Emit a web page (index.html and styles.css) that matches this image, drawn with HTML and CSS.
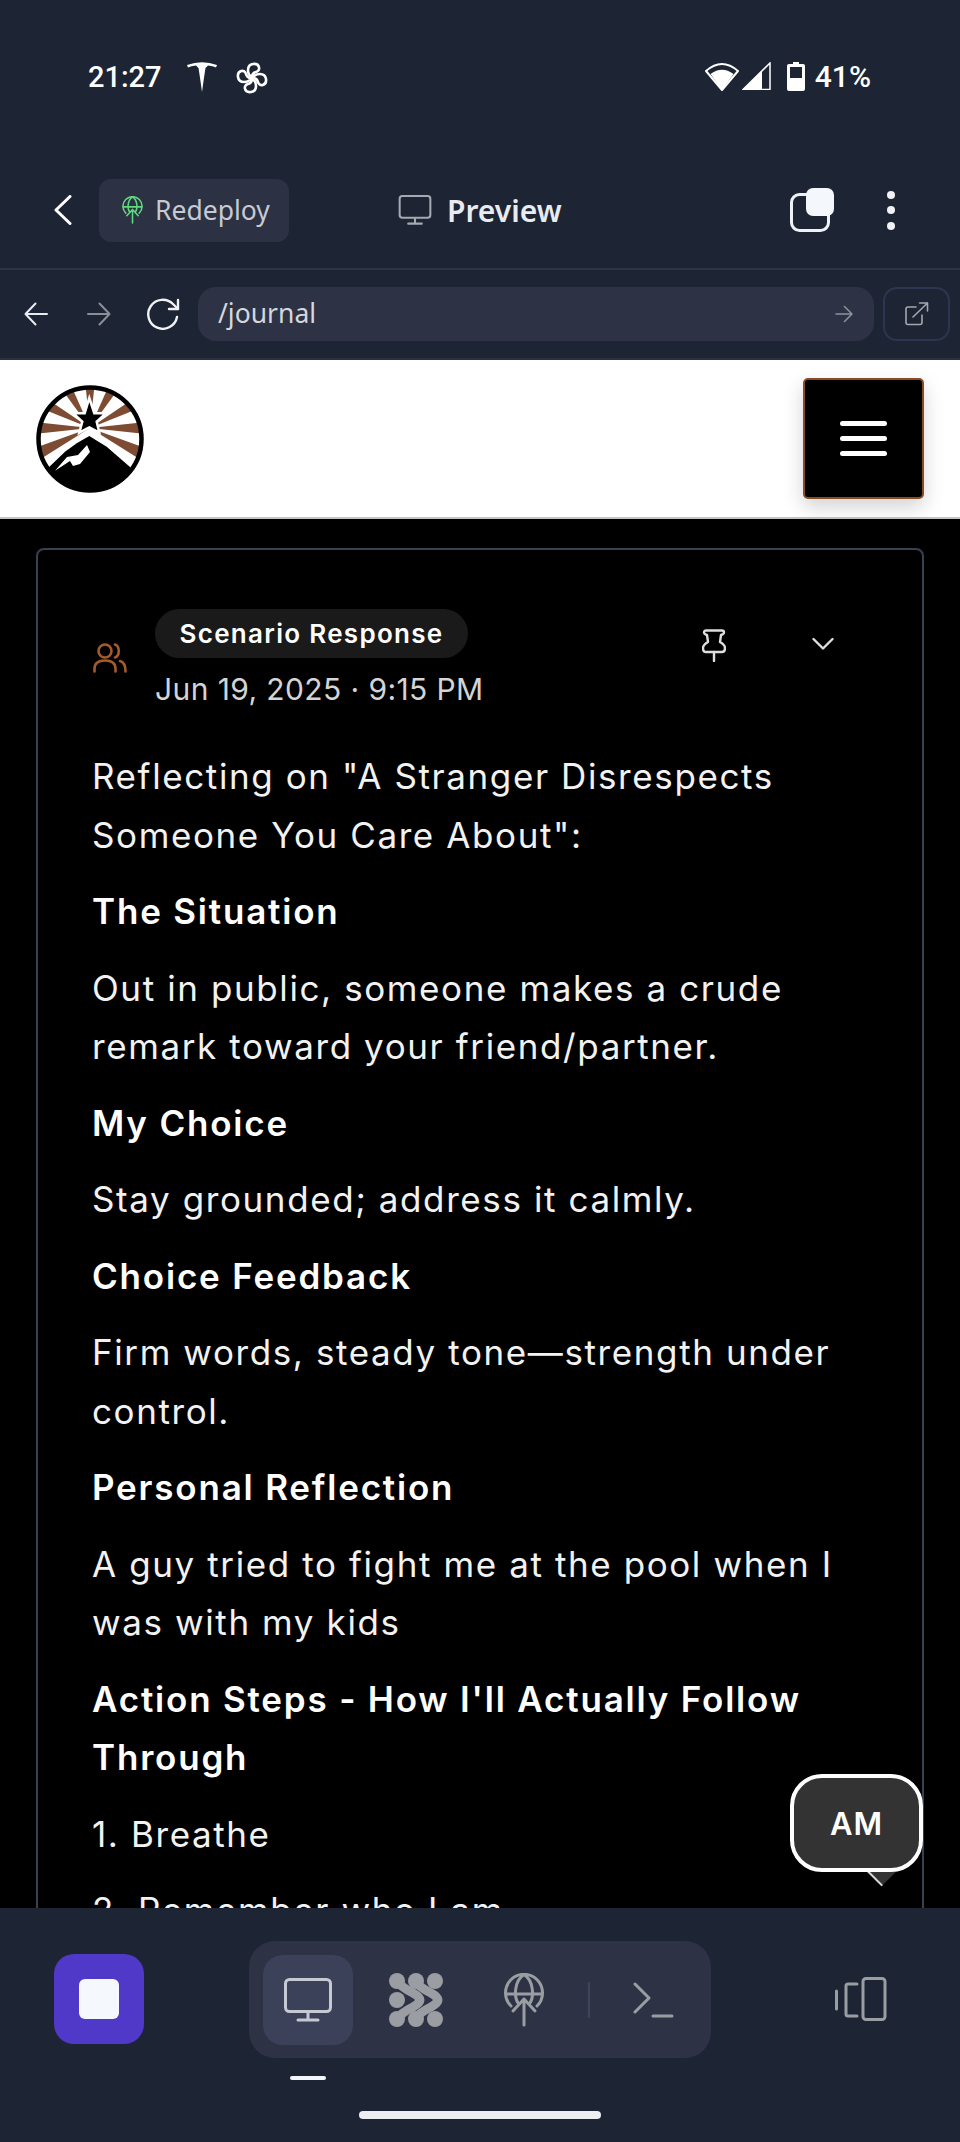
FILE: index.html
```html
<!DOCTYPE html>
<html lang="en">
<head>
  <meta charset="UTF-8" />
  <meta name="viewport" content="width=device-width, initial-scale=1.0"/>
  <title>Journal - Preview</title>
  <link rel="stylesheet" href="styles.css">
</head>
<body>
  <svg class="defs" width="0" height="0">
    <symbol id="globe-up" viewBox="0 0 40 54">
      <g fill="none" stroke="currentColor" stroke-width="3" stroke-linecap="round" stroke-linejoin="round">
        <path d="M7 33 A18.500 18.500 0 1 1 33 33"/>
        <path d="M20 1.500 C10 8 10 24 14 30"/>
        <path d="M20 1.500 C30 8 30 24 26 30"/>
        <path d="M2 21 H38"/>
        <path d="M20 52 V26 M9 38 L20 26 L31 38"/>
      </g>
    </symbol>
    <symbol id="monitor" viewBox="0 0 48 44">
      <g fill="none" stroke="currentColor" stroke-width="3" stroke-linecap="round" stroke-linejoin="round">
        <rect x="1.500" y="1.500" width="45" height="32" rx="4"/>
        <path d="M24 34 V42 M14 42 H34"/>
      </g>
    </symbol>
  </svg>

  <div class="app">
    <header class="topbar">
      <div class="status">
        <div class="status-left">
          <span class="clock">21:27</span>
          <svg class="tesla" viewBox="0 0 30 30" fill="#fff">
            <path d="M0 3 Q15 -2.500 30 3 L29 5.500 Q26 3.600 21 3.400 L18.500 6 Q17.500 12 15 30 Q12.500 12 11.500 6 L9 3.400 Q4 3.600 1 5.500 Z"/>
          </svg>
          <svg class="fan" viewBox="0 0 32 32" fill="none" stroke="#fff" stroke-width="2.600" stroke-linejoin="round">
            <path d="M16 15 C11 13 10 3 17 2 C24 1 25 9 20 10 C18 10.500 16 12 16 15 Z"/>
            <path d="M16 15 C11 13 10 3 17 2 C24 1 25 9 20 10 C18 10.500 16 12 16 15 Z" transform="rotate(90 16 16)"/>
            <path d="M16 15 C11 13 10 3 17 2 C24 1 25 9 20 10 C18 10.500 16 12 16 15 Z" transform="rotate(180 16 16)"/>
            <path d="M16 15 C11 13 10 3 17 2 C24 1 25 9 20 10 C18 10.500 16 12 16 15 Z" transform="rotate(270 16 16)"/>
          </svg>
        </div>
        <div class="status-right">
          <svg class="wifi" viewBox="0 0 34 29">
            <path d="M17 28 L1 9 Q17 -5 33 9 Z" fill="none" stroke="#fff" stroke-width="2" stroke-linejoin="round"/>
            <path d="M17 28 L5.500 12 Q17 3.500 28.500 12 Z" fill="#fff"/>
          </svg>
          <svg class="signal" viewBox="0 0 29 28">
            <path d="M1 27.500 L28 1 V27.500 Z" fill="none" stroke="#fff" stroke-width="1.500"/>
            <path d="M1 27.500 L20 9 V27.500 Z" fill="#fff"/>
          </svg>
          <svg class="battery" viewBox="0 0 18 29">
            <path d="M6 0 H12 V2 H16 Q18 2 18 4 V27 Q18 29 16 29 H2 Q0 29 0 27 V4 Q0 2 2 2 H6 Z M3 5 V16 H15 V5 Z" fill="#fff" fill-rule="evenodd"/>
          </svg>
          <span class="percent">41%</span>
        </div>
      </div>

      <div class="toolbar">
        <svg class="chevron-back" viewBox="0 0 18 30" fill="none" stroke="#fff" stroke-width="3" stroke-linecap="round" stroke-linejoin="round">
          <path d="M16 1.500 L2 15 L16 28.500"/>
        </svg>
        <button class="redeploy">
          <svg class="redeploy-icon"><use href="#globe-up"/></svg>
          Redeploy
        </button>
        <div class="title">
          <svg class="title-icon"><use href="#monitor"/></svg>
          <span>Preview</span>
        </div>
        <svg class="tabs-icon" viewBox="0 0 44 44">
          <rect x="1.500" y="6.500" width="37" height="36" rx="8" fill="none" stroke="#eef2f7" stroke-width="3"/>
          <rect x="16" y="0" width="28" height="28" rx="7" fill="#f4f8fd"/>
        </svg>
        <div class="dots"><i></i><i></i><i></i></div>
      </div>

      <div class="addressbar">
        <svg class="nav-arrow" viewBox="0 0 24 24" fill="none" stroke="#e8ebf0" stroke-width="2" stroke-linecap="round" stroke-linejoin="round">
          <path d="M23 12 H1.500 M11.500 1.500 L1.500 12 L11.500 22.500"/>
        </svg>
        <svg class="nav-arrow nav-arrow-off" viewBox="0 0 24 24" fill="none" stroke="#8a8e96" stroke-width="2" stroke-linecap="round" stroke-linejoin="round">
          <path d="M1 12 H22.500 M12.500 1.500 L22.500 12 L12.500 22.500"/>
        </svg>
        <svg class="reload" viewBox="0 0 34 32" fill="none" stroke="#f0f2f5" stroke-width="2.400" stroke-linecap="round" stroke-linejoin="round">
          <path d="M31 19 A14.500 14.500 0 1 1 27 6 L32 11"/>
          <path d="M32 2 V11 H23"/>
        </svg>
        <div class="url">
          <span>/journal</span>
          <svg class="url-go" viewBox="0 0 18 18" fill="none" stroke="#8f939c" stroke-width="1.500" stroke-linecap="round" stroke-linejoin="round">
            <path d="M1 9 H17 M9.500 1.500 L17 9 L9.500 16.500"/>
          </svg>
        </div>
        <div class="external">
          <svg viewBox="0 0 24 24" fill="none" stroke="#a3a7af" stroke-width="1.600" stroke-linecap="round" stroke-linejoin="round">
            <path d="M11 5 H3 Q1 5 1 7 V20.500 Q1 22.500 3 22.500 H15 Q17 22.500 17 20.500 V13"/>
            <path d="M8 15 L22.500 1 M14.500 1 H22.500 V9"/>
          </svg>
        </div>
      </div>
    </header>

    <main class="preview">
      <nav class="site-nav">
        <svg class="logo" viewBox="0 0 108 108">
          <defs><clipPath id="logo-clip"><circle cx="54" cy="54" r="51"/></clipPath></defs>
          <circle cx="54" cy="54" r="52" fill="#fff"/>
          <g clip-path="url(#logo-clip)">
            <g fill="#7d4c33">
              <path d="M54 43 L120 36 V50 Z"/>
              <path d="M54 43 L120 36 V50 Z" transform="rotate(26 54 43)"/>
              <path d="M54 43 L120 36 V50 Z" transform="rotate(-28 54 43)"/>
              <path d="M54 43 L120 36 V50 Z" transform="rotate(-60 54 43)"/>
              <path d="M54 43 L120 36 V50 Z" transform="rotate(-90 54 43)"/>
              <path d="M54 43 L120 36 V50 Z" transform="rotate(-120 54 43)"/>
              <path d="M54 43 L120 36 V50 Z" transform="rotate(-152 54 43)"/>
              <path d="M54 43 L120 36 V50 Z" transform="rotate(180 54 43)"/>
              <path d="M54 43 L120 36 V50 Z" transform="rotate(154 54 43)"/>
            </g>
            <path d="M53.300 13 L58.300 28.300 H70 L60.700 36.700 L63.300 47.700 L53.300 42.300 L43.300 47.700 L46.300 36.700 L37.300 28.300 H48.700 Z" fill="#000" stroke="#fff" stroke-width="2.500" stroke-linejoin="miter"/>
            <path d="M53.300 48 L72 59 L100 88 V110 H8 V86 L28 63 L40 56 Z" fill="#fff"/>
            <path d="M53.300 51 L70.700 61.700 L94 82 V110 H10 V85 L29 66.700 L40.700 58.300 Z" fill="#000"/>
            <path d="M19 85.700 L31 72 L42 70 L51 60 L54 67 L44 79 L37 81 L34 76 Z" fill="#fff"/>
          </g>
          <circle cx="54" cy="54" r="51.500" fill="none" stroke="#000" stroke-width="4.500"/>
        </svg>
        <button class="menu-btn"><i></i><i></i><i></i></button>
      </nav>

      <div class="page">
        <article class="entry">
          <div class="entry-head">
            <svg class="users-icon" viewBox="0 0 34 30" fill="none" stroke="#a45a2a" stroke-width="2.600" stroke-linecap="round">
              <circle cx="12" cy="8" r="6.500"/>
              <path d="M22 1.500 C27 3 27 13 22 14.500"/>
              <path d="M1.500 28.500 V26 C1.500 20 6 17.500 12 17.500 C18 17.500 22.500 20 22.500 26 V28.500"/>
              <path d="M27 18 C31 19 32.500 22 32.500 28.500"/>
            </svg>
            <div class="entry-meta">
              <span class="chip">Scenario Response</span>
              <time class="entry-date">Jun 19, 2025 · 9:15 PM</time>
            </div>
            <div class="entry-actions">
              <svg class="pin-icon" viewBox="0 0 24 33" fill="none" stroke="#dedede" stroke-width="2.400" stroke-linecap="round" stroke-linejoin="round">
                <path d="M4 1.500 H20 Q22 1.500 22 3.500 Q22 5 19 6 L18 13 Q23 16 23 19 Q23 23 20 23 H4 Q1 23 1 19 Q1 16 6 13 L5 6 Q2 5 2 3.500 Q2 1.500 4 1.500 Z"/>
                <path d="M12 23 V32"/>
              </svg>
              <svg class="chevron-icon" viewBox="0 0 22 13" fill="none" stroke="#dedede" stroke-width="2.400" stroke-linecap="round" stroke-linejoin="round">
                <path d="M1.500 2 L11 11.500 L20.500 2"/>
              </svg>
            </div>
          </div>

          <div class="entry-body">
            <p>Reflecting on "A Stranger Disrespects Someone You Care About":</p>
            <h4>The Situation</h4>
            <p>Out in public, someone makes a crude remark toward your friend/partner.</p>
            <h4>My Choice</h4>
            <p>Stay grounded; address it calmly.</p>
            <h4>Choice Feedback</h4>
            <p>Firm words, steady tone—strength under control.</p>
            <h4>Personal Reflection</h4>
            <p>A guy tried to fight me at the pool when I was with my kids</p>
            <h4>Action Steps - How I'll Actually Follow Through</h4>
            <p>1. Breathe</p>
            <p>2. Remember who I am</p>
          </div>
        </article>
      </div>

      <div class="am-bubble">
        <span class="am-tail"></span>
        <span class="am-face">AM</span>
      </div>
    </main>

    <footer class="dock">
      <button class="stop-btn"><i></i></button>
      <div class="dock-center">
        <div class="dock-tabs">
          <div class="dock-tab dock-tab-active">
            <svg class="dock-monitor"><use href="#monitor"/></svg>
          </div>
          <div class="dock-tab">
            <svg class="nodes-icon" viewBox="0 0 54 54" fill="#9a9ea3">
              <circle cx="46" cy="8" r="8"/>
              <circle cx="8" cy="27" r="8"/>
              <circle cx="46" cy="46" r="8"/>
              <circle cx="8" cy="8" r="8"/>
              <circle cx="27" cy="8" r="8"/>
              <circle cx="8" cy="46" r="8"/>
              <circle cx="27" cy="46" r="8"/>
              <g fill="none" stroke="#9a9ea3" stroke-width="9" stroke-linecap="round" stroke-linejoin="round">
                <path d="M8 8 C12 14 18 17 24 20 Q31 24 31 27 Q31 30 24 34 C18 37 12 40 8 46"/>
                <path d="M26 8 C30 14 36 17 42 20 Q49 24 49 27 Q49 30 42 34 C36 37 30 40 26 46"/>
              </g>
            </svg>
          </div>
          <div class="dock-tab">
            <svg class="globe-icon"><use href="#globe-up"/></svg>
          </div>
          <span class="dock-divider"></span>
          <div class="dock-tab dock-tab-term">
            <svg class="term-icon" viewBox="0 0 41 36" fill="none" stroke="#9a9ea3" stroke-width="3" stroke-linecap="round" stroke-linejoin="round">
              <path d="M2 2 L16 16 L2 30"/>
              <path d="M20 34 H39"/>
            </svg>
          </div>
        </div>
        <span class="dock-underline"></span>
      </div>
      <svg class="device-icon" viewBox="0 0 52 44" fill="none" stroke="#9a9ea3" stroke-width="3" stroke-linecap="round" stroke-linejoin="round">
        <path d="M1.500 14 V32"/>
        <path d="M22 7 H13 Q11 7 11 9 V37 Q11 39 13 39 H22"/>
        <rect x="28" y="1.500" width="22" height="41" rx="3"/>
      </svg>
      <span class="home-bar"></span>
    </footer>
  </div>
</body>
</html>
```
FILE: styles.css
```css
* {
  box-sizing: border-box;
  margin: 0;
  padding: 0;
}

body {
  background: #000;
  font-family: "Inter", "Liberation Sans", sans-serif;
  color: #fff;
}

button {
  border: none;
  font: inherit;
}

.defs {
  display: block;
}

.app {
  display: flex;
  flex-direction: column;
  width: 960px;
  height: 2142px;
  overflow: hidden;
}

/* top app chrome */
.topbar {
  background: #1d2433;
  height: 360px;
  flex-shrink: 0;
}

.status {
  display: flex;
  justify-content: space-between;
  height: 154px;
  padding: 62px 89px 0 88px;
}

.status-left,
.status-right {
  display: flex;
  align-items: flex-start;
  height: 31px;
}

.clock,
.percent {
  font-family: "Roboto", sans-serif;
  font-weight: 500;
  font-size: 29px;
  line-height: 30px;
}

.percent {
  font-size: 30px;
  margin-left: 10px;
}

.tesla {
  width: 30px;
  height: 30px;
  margin-left: 25px;
}

.fan {
  width: 32px;
  height: 32px;
  margin-left: 19px;
}

.wifi {
  width: 34px;
  height: 29px;
}

.signal {
  width: 29px;
  height: 28px;
  margin-left: 3px;
}

.battery {
  width: 18px;
  height: 29px;
  margin-left: 16px;
}

.toolbar {
  display: flex;
  align-items: center;
  height: 116px;
  padding: 0 0 2px 54px;
  border-bottom: 2px solid #2d3246;
}

.chevron-back {
  width: 18px;
  height: 30px;
}

.redeploy {
  display: flex;
  align-items: center;
  width: 190px;
  height: 63px;
  margin-left: 27px;
  padding-left: 23px;
  gap: 12px;
  background: #2c3144;
  border-radius: 12px;
  color: #c5cad3;
  font-family: "Noto Sans", sans-serif;
  font-size: 26.500px;
  line-height: 60px;
}

.redeploy-icon {
  width: 21px;
  height: 28px;
  color: #5fd97e;
}

.title {
  display: flex;
  align-items: center;
  gap: 15px;
  margin-left: 109px;
  font-family: "Noto Sans", sans-serif;
  font-weight: 600;
  font-size: 30px;
  color: #e8ebf0;
}

.title-icon {
  width: 34px;
  height: 30px;
  color: #a5a9b0;
}

.tabs-icon {
  width: 44px;
  height: 44px;
  margin-left: 228px;
}

.dots {
  display: flex;
  flex-direction: column;
  gap: 7.500px;
  margin-left: 53px;
}

.dots i {
  display: block;
  width: 8px;
  height: 8px;
  border-radius: 50%;
  background: #f0f2f5;
}

.addressbar {
  display: flex;
  align-items: flex-start;
  height: 90px;
  padding: 17px 10px 0 24px;
  border-bottom: 2px solid #2a3042;
}

.nav-arrow {
  width: 24px;
  height: 24px;
  margin-top: 15px;
}

.nav-arrow-off {
  margin-left: 39px;
}

.reload {
  width: 34px;
  height: 32px;
  margin: 11px 0 0 35px;
}

.url {
  display: flex;
  align-items: center;
  justify-content: space-between;
  width: 676px;
  height: 54px;
  margin-left: 18px;
  padding: 0 21px 0 20px;
  background: #2d3245;
  border-radius: 18px;
  font-family: "Noto Sans", sans-serif;
  font-size: 26.500px;
  color: #d4d7dd;
}

.url span {
  margin-top: -2px;
}

.url-go {
  width: 18px;
  height: 18px;
}

.external {
  display: flex;
  align-items: center;
  justify-content: center;
  width: 67px;
  height: 54px;
  margin-left: 9px;
  border: 2px solid #2d3550;
  border-radius: 14px;
}

.external svg {
  width: 24px;
  height: 24px;
}

/* the previewed site */
.preview {
  position: relative;
  flex: 1;
  min-height: 0;
  overflow: hidden;
  background: #000;
}

.site-nav {
  position: relative;
  z-index: 1;
  display: flex;
  align-items: center;
  justify-content: space-between;
  height: 159px;
  padding: 0 36px;
  background: #fff;
  border-bottom: 2px solid #c4c4c4;
}

.logo {
  width: 108px;
  height: 108px;
}

.menu-btn {
  display: flex;
  flex-direction: column;
  align-items: center;
  justify-content: center;
  gap: 10px;
  width: 121px;
  height: 121px;
  background: #000;
  border: 2px solid #8b4a24;
  border-radius: 5px;
  box-shadow: 0 8px 20px rgba(0, 0, 0, 0.18);
}

.menu-btn i {
  display: block;
  width: 47px;
  height: 5px;
  border-radius: 3px;
  background: #fff;
}

.page {
  padding: 29px 36px 0;
}

.entry {
  border: 2px solid #374151;
  border-radius: 8px;
  padding: 59px 54px 200px;
}

.entry-head {
  display: flex;
  align-items: flex-start;
}

.users-icon {
  width: 34px;
  height: 30px;
  margin: 34px 0 0 1px;
  flex-shrink: 0;
}

.entry-meta {
  display: flex;
  flex-direction: column;
  align-items: flex-start;
  margin-left: 28px;
}

.chip {
  height: 49px;
  padding: 0 24.500px;
  background: #1a1a1a;
  border-radius: 25px;
  font-weight: 600;
  font-size: 26px;
  line-height: 49px;
  letter-spacing: 1.300px;
  white-space: nowrap;
}

.entry-date {
  margin-top: 12px;
  font-size: 30px;
  line-height: 38px;
  letter-spacing: 0.400px;
  color: #d4d4d4;
  white-space: nowrap;
}

.entry-actions {
  display: flex;
  align-items: flex-start;
  gap: 86px;
  margin: 20px 0 0 auto;
  padding-right: 34px;
}

.pin-icon {
  width: 24px;
  height: 33px;
}

.chevron-icon {
  width: 22px;
  height: 13px;
  margin-top: 8px;
}

.entry-body {
  margin-top: 39px;
  font-size: 35px;
  line-height: 58.500px;
  letter-spacing: 1.600px;
  color: #f2f2f2;
}

.entry-body p,
.entry-body h4 {
  margin-bottom: 18px;
}

.entry-body h4 {
  font-weight: 600;
  font-size: 35px;
  letter-spacing: 1.800px;
  color: #fff;
}

/* floating AM badge */
.am-bubble {
  position: absolute;
  left: 790px;
  top: 1414px;
  width: 133px;
  height: 98px;
}

.am-face {
  position: absolute;
  inset: 0;
  display: flex;
  align-items: center;
  justify-content: center;
  background: #333;
  border: 4px solid #fff;
  border-radius: 32px;
  font-weight: 600;
  font-size: 31px;
  letter-spacing: 1px;
}

.am-tail {
  position: absolute;
  left: 81px;
  top: 87px;
  width: 21px;
  height: 21px;
  background: #333;
  border-bottom: 2px solid #ddd;
  transform: rotate(45deg);
}

/* bottom dock */
.dock {
  position: relative;
  display: flex;
  align-items: flex-start;
  flex-shrink: 0;
  height: 234px;
  padding: 33px 0 0 54px;
  background: #1d2433;
}

.stop-btn {
  display: flex;
  align-items: center;
  justify-content: center;
  width: 90px;
  height: 90px;
  margin-top: 13px;
  background: #5038c8;
  border-radius: 20px;
}

.stop-btn i {
  display: block;
  width: 40px;
  height: 40px;
  border-radius: 6px;
  background: #f5f8fd;
}

.dock-center {
  display: flex;
  flex-direction: column;
  margin-left: 105px;
}

.dock-tabs {
  display: flex;
  align-items: center;
  width: 462px;
  height: 117px;
  padding-left: 14px;
  background: #2d3245;
  border-radius: 26px;
}

.dock-tab {
  display: flex;
  align-items: center;
  justify-content: center;
  width: 90px;
  height: 90px;
  margin-right: 18px;
  border-radius: 20px;
}

.dock-tab:nth-child(3) {
  margin-right: 0;
}

.dock-tab-active {
  background: #3b4159;
}

.dock-tab-term {
  margin-left: 18px;
  margin-right: 0;
}

.dock-monitor {
  width: 48px;
  height: 44px;
  color: #c5c9d1;
}

.nodes-icon {
  width: 54px;
  height: 54px;
}

.globe-icon {
  width: 40px;
  height: 54px;
  color: #9a9ea3;
}

.dock-divider {
  width: 2px;
  height: 36px;
  margin: 0 0 0 19px;
  background: #3d4459;
}

.term-icon {
  width: 41px;
  height: 36px;
}

.dock-underline {
  display: block;
  width: 36px;
  height: 4px;
  margin: 18px 0 0 41px;
  border-radius: 2px;
  background: #f3f6fb;
}

.device-icon {
  width: 52px;
  height: 44px;
  margin: 36px 0 0 124px;
}

.home-bar {
  position: absolute;
  left: 359px;
  bottom: 23px;
  width: 242px;
  height: 8px;
  border-radius: 4px;
  background: #eceef1;
}
```
